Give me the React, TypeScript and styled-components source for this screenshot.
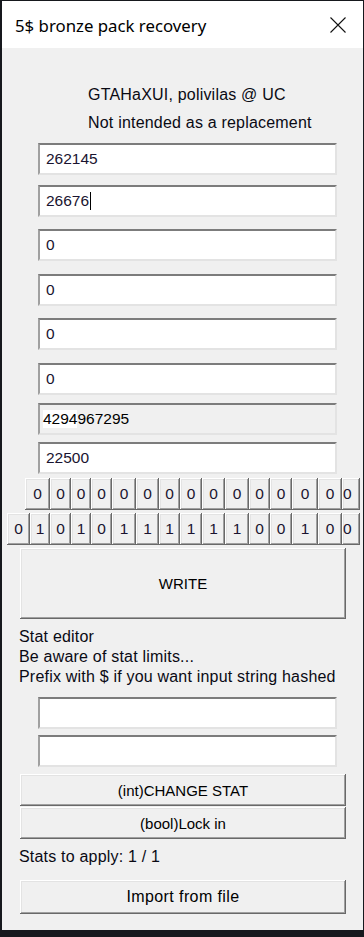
import React from "react";
import styled, { createGlobalStyle } from "styled-components";

const GlobalStyle = createGlobalStyle`
  body {
    margin: 0;
    background: #16181d;
    font-family: "Liberation Sans", Arial, sans-serif;
  }
`;

const fields = [
  { value: "262145", gap: 6, caret: false },
  { value: "26676", gap: 10, caret: true },
  { value: "0", gap: 12, caret: false },
  { value: "0", gap: 13, caret: false },
  { value: "0", gap: 12, caret: false },
  { value: "0", gap: 13, caret: false },
];

const topBits = {
  start: 23,
  widths: [25, 21, 20, 21, 24, 23, 21, 22, 23, 24, 21, 22, 26, 24, 18],
  bits: [0, 0, 0, 0, 0, 0, 0, 0, 0, 0, 0, 0, 0, 0, 0],
};

const bottomBits = {
  start: 5,
  widths: [23, 20, 21, 20, 21, 24, 23, 21, 22, 23, 24, 21, 22, 26, 24, 18],
  bits: [0, 1, 0, 1, 0, 1, 1, 1, 1, 1, 1, 0, 0, 1, 0, 0],
};

const CloseIcon = () => (
  <svg width="16" height="16" viewBox="0 0 16 16">
    <path d="M0.5 0.5 L15.5 15.5 M15.5 0.5 L0.5 15.5" stroke="#111" strokeWidth="1.1" fill="none" />
  </svg>
);

const BitRow = ({ start, widths, bits, top }: { start: number; widths: number[]; bits: number[]; top: number }) => (
  <Bits $start={start} $top={top}>
    {bits.map((b, i) => (
      <BitButton key={i} $w={widths[i]} $last={i === bits.length - 1}>
        {b}
      </BitButton>
    ))}
  </Bits>
);

const App = () => {
  return (
    <>
      <GlobalStyle />
      <Window>
        <TitleBar>
          <Title>5$ bronze pack recovery</Title>
          <CloseIcon />
        </TitleBar>
        <Body>
          <Header>
            <div>GTAHaXUI, polivilas @ UC</div>
            <div>Not intended as a replacement</div>
          </Header>
          {fields.map((f, i) => (
            <Field key={i} $gap={f.gap}>
              {f.value}
              {f.caret && <Caret />}
            </Field>
          ))}
          <Field $gap={8} $disabled>
            <Highlight>4294</Highlight>967295
          </Field>
          <Field $gap={7}>22500</Field>
          <BitRow {...topBits} top={4} />
          <BitRow {...bottomBits} top={3} />
          <Button $h={71} $gap={3}>WRITE</Button>
          <Notes>
            <div>Stat editor</div>
            <div>Be aware of stat limits...</div>
            <div>Prefix with $ if you want input string hashed</div>
          </Notes>
          <Field $gap={10} />
          <Field $gap={6} />
          <Button $h={32} $gap={7}>(int)CHANGE STAT</Button>
          <Button $h={32} $gap={1}>(bool)Lock in</Button>
          <Counter>Stats to apply: 1 / 1</Counter>
          <Button $h={34} $gap={13} $wide>Import from file</Button>
        </Body>
      </Window>
    </>
  );
};

export default App;

const Window = styled.div`
  width: 361px;
  height: 929px;
  margin: 1px 0 0 2px;
  background: #f0f0f0;
  display: flex;
  flex-direction: column;
`;

const TitleBar = styled.div`
  height: 47px;
  background: #fff;
  display: flex;
  align-items: center;
  justify-content: space-between;
  padding: 0 17px 0 13px;
  flex-shrink: 0;
`;

const Title = styled.div`
  font-family: "Noto Sans", sans-serif;
  font-size: 16.8px;
  color: #000;
  margin-top: 2px;
`;

const Body = styled.div`
  display: flex;
  flex-direction: column;
  color: #0a0a14;
  font-size: 16px;
  letter-spacing: 0.2px;
`;

const Header = styled.div`
  margin: 33px 0 0 86px;
  line-height: 28px;
`;

const Field = styled.div<{ $gap: number; $disabled?: boolean }>`
  box-sizing: border-box;
  width: 299px;
  height: 32px;
  margin: ${(p) => p.$gap}px 0 0 36px;
  padding-left: ${(p) => (p.$disabled ? 3 : 6)}px;
  display: flex;
  align-items: center;
  background: ${(p) => (p.$disabled ? "#f0f0f0" : "#fff")};
  border-top: 2px solid #7c7c7c;
  border-left: 2px solid #a0a0a0;
  border-right: 2px solid #e3e3e3;
  border-bottom: 2px solid #e3e3e3;
  font-size: 15.5px;
  letter-spacing: 0;
  color: ${(p) => (p.$disabled ? "#000" : "#1a1430")};
`;

const Highlight = styled.span`
  background: #fff;
`;

const Caret = styled.span`
  width: 1px;
  height: 18px;
  background: #000;
  margin-left: 1px;
`;

const Bits = styled.div<{ $start: number; $top: number }>`
  display: flex;
  margin: ${(p) => p.$top}px 0 0 ${(p) => p.$start}px;
  height: 32px;
`;

const raised = `
  box-shadow: inset -1px -1px #696969, inset 1px 1px #ffffff,
    inset -2px -2px #a0a0a0, inset 2px 2px #e3e3e3;
`;

const BitButton = styled.div<{ $w: number; $last: boolean }>`
  box-sizing: border-box;
  width: ${(p) => p.$w}px;
  height: 32px;
  flex-shrink: 0;
  display: flex;
  align-items: center;
  justify-content: ${(p) => (p.$last ? "flex-start" : "center")};
  padding-left: ${(p) => (p.$last ? 1 : 0)}px;
  overflow: hidden;
  background: #f0f0f0;
  ${raised}
  font-size: 15.5px;
  letter-spacing: 0;
  color: #1a1430;
`;

const Button = styled.div<{ $h: number; $gap: number; $wide?: boolean }>`
  box-sizing: border-box;
  width: 326px;
  height: ${(p) => p.$h}px;
  margin: ${(p) => p.$gap}px 0 0 18px;
  display: flex;
  align-items: center;
  justify-content: center;
  background: #f0f0f0;
  ${raised}
  font-size: ${(p) => (p.$wide ? 16 : 15)}px;
  letter-spacing: ${(p) => (p.$wide ? 0.4 : 0)}px;
  color: #000;
`;

const Notes = styled.div`
  margin: 8px 0 0 17px;
  line-height: 20px;
`;

const Counter = styled.div`
  margin: 8px 0 0 17px;
  line-height: 20px;
`;
